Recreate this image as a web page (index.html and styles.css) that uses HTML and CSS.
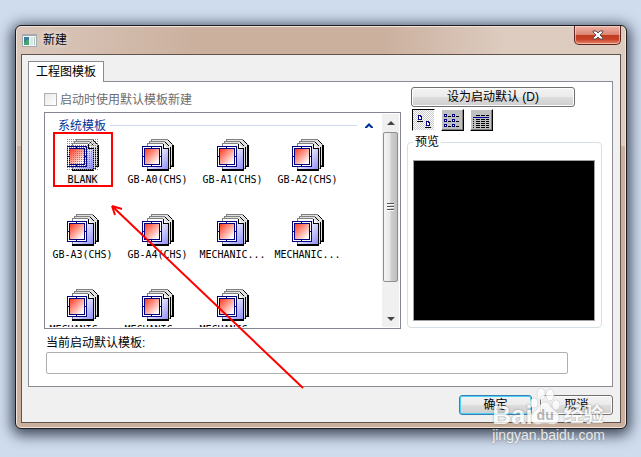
FILE: index.html
```html
<!DOCTYPE html>
<html lang="zh-CN">
<head>
    <meta charset="UTF-8">
    <meta name="viewport" content="width=device-width, initial-scale=1.0">
    <title>新建</title>
    <link rel="stylesheet" href="styles.css">
</head>
<body>
    <!-- shared template icon -->
    <svg class="defs" aria-hidden="true">
        <defs>
            <linearGradient id="sheetRed" x1="0" y1="0" x2="1" y2="1">
                <stop offset="0" stop-color="#ff3a20"/>
                <stop offset="0.9" stop-color="#fff"/>
            </linearGradient>
            <linearGradient id="sheetBlue" x1="0" y1="0" x2="1" y2="1">
                <stop offset="0.3" stop-color="#fff"/>
                <stop offset="1" stop-color="#8f8ff8"/>
            </linearGradient>
            <pattern id="selDots" width="2" height="2" patternUnits="userSpaceOnUse">
                <rect width="1" height="1" fill="#3399ff"/>
            </pattern>
        </defs>
        <symbol id="template" viewBox="0 0 32 32">
            <g shape-rendering="crispEdges">
                <path d="M9 0h17v1h1v1h1v1h1v1h1v1h1v1h1v21H9z" fill="#808080"/>
                <path d="M10 1h15l5 5v20H10z" fill="#e0e0e0"/>
                <path d="M30 6h2v22H29v-1h1zM26 1h1v1h1v1h1v1h1v1h-1V4h-1V3h-1V2h-1z" fill="#000"/>
                <path d="M7 2h16v1h1v1h1v1h1v1h1v1h1v1h1v22H7z" fill="#808080"/>
                <path d="M8 3h15l5 5v21H8z" fill="#e0e0e0"/>
                <path d="M28 8h1v22h-1zM23 3h1v1h1v1h1v1h1v1h-1V6h-1V5h-1V4h-1z" fill="#000"/>
                <path d="M5 4h16v1h1v1h1v1h1v1h1v1h1v1h1v22H5z" fill="#808080"/>
                <path d="M6 5h15l5 5v20H6z" fill="url(#sheetBlue)"/>
                <path d="M26 10h1v22H5v-2h21z" fill="#000"/>
                <path d="M21 5h1v4h5v1h-6z" fill="#000"/>
                <path d="M22 6h1v1h1v1h1v1h-3z" fill="#fff"/>
                <path d="M0 7h20v21H0z" fill="#000080"/>
                <path d="M1 8h18v19H1z" fill="#fff"/>
                <path d="M2 9h16v17H2z" fill="#000080"/>
                <path d="M3 10h14v15H3z" fill="url(#sheetRed)"/>
                <path d="M9 8h1v1h-1zM9 26h1v1h-1zM1 17h1v1h-1zM18 17h1v1h-1z" fill="#000080"/>
            </g>
        </symbol>
    </svg>

    <div class="window">
        <header class="titlebar">
            <svg class="app-icon" width="15" height="13" viewBox="0 0 15 13" shape-rendering="crispEdges">
                <path d="M0 0h15v13H0z" fill="#a5aab0"/>
                <path d="M1 2h13v10H1z" fill="#f4f7f8"/>
                <path d="M2 3h5v8H2z" fill="#3d7c98"/>
                <path d="M2 8h2v-2h3v5H2z" fill="#46a56c"/>
                <path d="M8 3h3v8H8z" fill="#dce6ea"/>
                <path d="M12 3h1v8h-1z" fill="#a9cbb8"/>
            </svg>
            <h1>新建</h1>
            <button class="close" type="button" aria-label="关闭">
                <svg width="12" height="10" viewBox="0 0 12 10">
                    <path d="M1 1h3l2 2 2-2h3v1L8 5l3 3v1H8L6 7 4 9H1V8l3-3-3-3z" fill="#fff" stroke="#5a4b50"/>
                </svg>
            </button>
        </header>

        <main class="client">
            <div class="tabs" role="tablist">
                <button class="tab" type="button" role="tab" aria-selected="true">工程图模板</button>
            </div>

            <section class="panel">
                <div class="columns">
                    <div class="left">
                        <div class="use-default">
                            <input type="checkbox" id="useDefault" disabled>
                            <label for="useDefault">启动时使用默认模板新建</label>
                        </div>

                        <div class="list">
                            <div class="list-content">
                                <div class="group-head">
                                    <h2>系统模板</h2>
                                    <span class="rule"></span>
                                    <svg width="8" height="5" viewBox="0 0 8 5"><path d="M0 4l4-4 4 4v1H6L4 3 2 5H0z" fill="#003399"/></svg>
                                </div>
                                <div class="items">
                                    <button class="item selected" type="button">
                                        <svg width="32" height="32"><use href="#template"/><path d="M0 0h32v32H0z" fill="url(#selDots)"/></svg>
                                        <span>BLANK</span>
                                    </button>
                                    <button class="item" type="button"><svg width="32" height="32"><use href="#template"/></svg><span>GB-A0(CHS)</span></button>
                                    <button class="item" type="button"><svg width="32" height="32"><use href="#template"/></svg><span>GB-A1(CHS)</span></button>
                                    <button class="item" type="button"><svg width="32" height="32"><use href="#template"/></svg><span>GB-A2(CHS)</span></button>
                                    <button class="item" type="button"><svg width="32" height="32"><use href="#template"/></svg><span>GB-A3(CHS)</span></button>
                                    <button class="item" type="button"><svg width="32" height="32"><use href="#template"/></svg><span>GB-A4(CHS)</span></button>
                                    <button class="item" type="button"><svg width="32" height="32"><use href="#template"/></svg><span>MECHANIC...</span></button>
                                    <button class="item" type="button"><svg width="32" height="32"><use href="#template"/></svg><span>MECHANIC...</span></button>
                                    <button class="item" type="button"><svg width="32" height="32"><use href="#template"/></svg><span>MECHANIC...</span></button>
                                    <button class="item" type="button"><svg width="32" height="32"><use href="#template"/></svg><span>MECHANIC...</span></button>
                                    <button class="item" type="button"><svg width="32" height="32"><use href="#template"/></svg><span>MECHANIC...</span></button>
                                </div>
                            </div>
                            <div class="scrollbar">
                                <button class="scroll-btn" type="button" aria-label="向上">
                                    <svg width="8" height="4" viewBox="0 0 8 4"><path d="M4 0l4 4H0z" fill="#444"/></svg>
                                </button>
                                <div class="track">
                                    <div class="thumb">
                                        <svg width="7" height="8" viewBox="0 0 7 8" shape-rendering="crispEdges"><path d="M0 0h7v1H0zM0 3h7v1H0zM0 6h7v1H0z" fill="#555"/><path d="M0 1h7v1H0zM0 4h7v1H0zM0 7h7v1H0z" fill="#fff"/></svg>
                                    </div>
                                </div>
                                <button class="scroll-btn" type="button" aria-label="向下">
                                    <svg width="8" height="4" viewBox="0 0 8 4"><path d="M0 0h8L4 4z" fill="#444"/></svg>
                                </button>
                            </div>
                        </div>
                    </div>

                    <div class="right">
                        <button class="btn set-default" type="button">设为启动默认 (D)</button>
                        <div class="views">
                            <button class="view active" type="button" aria-label="大图标">
                                <svg width="22" height="21" viewBox="0 0 22 21" shape-rendering="crispEdges">
                                    <path d="M5 5h3v1h1v4H5zM13 11h3v1h1v4h-4z" fill="#fff" />
                                    <path d="M5 5h3v1h1v4H5zM6 6v3h2V7H7V6zM13 11h3v1h1v4h-4zM14 12v3h2v-2h-1v-1z" fill="#000080" fill-rule="evenodd"/>
                                    <path d="M4 11h6v1H4zM12 17h6v1h-6z" fill="#000"/>
                                </svg>
                            </button>
                            <button class="view" type="button" aria-label="列表">
                                <svg width="22" height="21" viewBox="0 0 22 21" shape-rendering="crispEdges">
                                    <path d="M2 4h3v3H2zM10 4h3v3h-3zM2 9h3v3H2zM10 9h3v3h-3zM2 14h3v3H2zM10 14h3v3h-3z" fill="#000080"/>
                                    <path d="M3 5h1v1H3zM11 5h1v1h-1zM3 10h1v1H3zM11 10h1v1h-1zM3 15h1v1H3zM11 15h1v1h-1z" fill="#fff"/>
                                    <path d="M6 6h3v1H6zM14 6h3v1h-3zM6 11h3v1H6zM14 11h3v1h-3zM6 16h3v1H6zM14 16h3v1h-3z" fill="#000"/>
                                </svg>
                            </button>
                            <button class="view" type="button" aria-label="详细信息">
                                <svg width="22" height="21" viewBox="0 0 22 21" shape-rendering="crispEdges">
                                    <path d="M2 7h16v1H2zM2 9h1v1H2zM2 11h1v1H2zM2 13h1v1H2zM2 15h1v1H2zM2 17h1v1H2z" fill="#0000a0"/>
                                    <path d="M5 5.5h13M5 9.5h13M5 11.5h13M5 13.5h13M5 15.5h13M5 17.5h13" stroke="#000" stroke-dasharray="4 1"/>
                                </svg>
                            </button>
                        </div>
                        <fieldset class="preview">
                            <legend>预览</legend>
                            <div class="preview-box"></div>
                        </fieldset>
                    </div>
                </div>

                <div class="current">
                    <label for="currentTemplate">当前启动默认模板:</label>
                    <input type="text" id="currentTemplate" readonly>
                </div>
            </section>

            <footer class="actions">
                <button class="btn primary" type="button">确定</button>
                <button class="btn" type="button">取消</button>
            </footer>
        </main>
    </div>

    <!-- red marker and arrow drawn over the dialog -->
    <svg class="marks" width="260" height="264" viewBox="0 0 260 264" aria-hidden="true">
        <path d="M4 5h58v53H4z" fill="none" stroke="#f00" stroke-width="2"/>
        <path d="M63 79L253 260M62 78l3 9M62 78l10 3" fill="none" stroke="#f00" stroke-width="2"/>
    </svg>

    <div class="watermark">
        <div class="brand">
            <span class="bai">Bai</span>
            <span class="paw">
                <svg width="30" height="37" viewBox="0 0 30 37">
                    <g fill="#fff" stroke="#bbb" stroke-opacity="0.5">
                        <ellipse cx="4" cy="15" rx="4" ry="5"/>
                        <ellipse cx="11" cy="6" rx="4" ry="6"/>
                        <ellipse cx="20" cy="7" rx="4" ry="6"/>
                        <ellipse cx="26" cy="17" rx="4" ry="5"/>
                        <path d="M15 14c4 0 5 4 8 7 4 3 7 6 6 10-1 5-5 6-9 5-3-1-7-1-10 0-5 1-9-1-9-6 0-4 4-6 6-9 3-3 4-7 8-7z"/>
                    </g>
                </svg>
                <span class="du">du</span>
            </span>
            <span class="exp">经验</span>
        </div>
        <div class="url">jingyan.baidu.com</div>
    </div>
</body>
</html>
```

FILE: styles.css
```css
* {
    box-sizing: border-box;
}

body {
    margin: 0;
    height: 100vh;
    padding: 25px 14px 28px 15px;
    display: flex;
    background-color: #cfdcee;
    font-family: "Liberation Sans", "Noto Sans CJK SC", sans-serif;
    font-size: 12px;
    line-height: 16px;
    color: #000;
    overflow: hidden;
}

button,
input {
    font: inherit;
    color: inherit;
    margin: 0;
    padding: 0;
}

h1,
h2 {
    margin: 0;
    font-size: 12px;
    font-weight: normal;
}

svg {
    display: block;
    flex: none;
}

.defs {
    position: absolute;
    width: 0;
    height: 0;
}

/* Window frame */
.window {
    flex: 1;
    min-width: 0;
    display: flex;
    flex-direction: column;
    padding: 0 5px 5px;
    border: 1px solid #1d1d1d;
    border-radius: 6px;
    background: linear-gradient(to right, rgba(255, 255, 255, 0.3), rgba(255, 255, 255, 0) 30%, rgba(255, 255, 255, 0) 60%, rgba(255, 255, 255, 0.35) 80%) 0 0 / 100% 120px no-repeat #cbb09e;
    box-shadow: inset 0 0 0 1px #f0e4dc, 0 3px 14px 3px rgba(20, 30, 45, 0.8);
}

.titlebar {
    height: 28px;
    display: flex;
    align-items: center;
    gap: 6px;
    padding-left: 1px;
}

.titlebar h1 {
    flex: 1;
    text-shadow: 0 0 6px #fff;
}

.close {
    align-self: flex-start;
    width: 47px;
    height: 19px;
    display: flex;
    align-items: center;
    justify-content: center;
    border: 1px solid #5c2520;
    border-top: 0;
    border-radius: 0 0 5px 5px;
    background: linear-gradient(#efb5a8, #dc8573 48%, #c03a20 50%, #c9432a 75%, #e8866a);
    box-shadow: inset 0 0 0 1px rgba(255, 220, 210, 0.6);
}

.client {
    flex: 1;
    min-height: 0;
    display: flex;
    flex-direction: column;
    padding: 6px 7px 7px 6px;
    border: 1px solid #61544c;
    background: #f0f0f0;
}

.tabs {
    display: flex;
    margin-bottom: -1px;
}

.tab {
    position: relative;
    height: 21px;
    padding: 0 7px;
    border: 1px solid #898c95;
    border-bottom: 0;
    background: #fff;
}

.panel {
    flex: 1;
    min-height: 0;
    display: flex;
    flex-direction: column;
    padding: 5px 10px 12px 15px;
    border: 1px solid #898c95;
    background: #fff;
}

.columns {
    flex: 1;
    min-height: 0;
    display: grid;
    grid-template-columns: 1fr 195px;
    grid-template-rows: 100%;
    gap: 6px;
}

.left,
.right {
    min-width: 0;
    min-height: 0;
    display: flex;
    flex-direction: column;
}

.use-default {
    height: 25px;
    display: flex;
    align-items: center;
    gap: 3px;
    color: #6d6d6d;
}

.use-default input {
    appearance: none;
    width: 13px;
    height: 13px;
    border: 1px solid #b1b1b1;
    background: linear-gradient(135deg, #e8e8e8, #fff);
}

/* Template list */
.list {
    flex: 1;
    min-height: 0;
    display: flex;
    border: 1px solid #828790;
    padding: 1px;
}

.list-content {
    flex: 1;
    min-width: 0;
    overflow: hidden;
}

.group-head {
    height: 23px;
    display: flex;
    align-items: center;
    gap: 4px;
    padding: 0 9px 0 12px;
}

.group-head h2 {
    color: #003399;
}

.group-head .rule {
    flex: 1;
    height: 1px;
    margin-right: 4px;
    background: #cfdaee;
}

.items {
    display: grid;
    grid-template-columns: repeat(auto-fill, 75px);
    grid-auto-rows: 75px;
    margin-left: -1px;
}

.item {
    display: flex;
    flex-direction: column;
    align-items: center;
    justify-content: flex-start;
    gap: 3px;
    padding: 2px 0 0;
    border: 0;
    background: none;
    font-family: "DejaVu Sans Mono", monospace;
    font-size: 10px;
    line-height: 12px;
}

.item.selected span {
    background: #f0f0f0;
}

.scrollbar {
    width: 17px;
    display: flex;
    flex-direction: column;
    background: #f0f0f0;
}

.scroll-btn {
    height: 17px;
    display: flex;
    align-items: center;
    justify-content: center;
    border: 0;
    background: none;
}

.track {
    flex: 1;
    padding: 1px;
}

.thumb {
    height: 85%;
    display: flex;
    align-items: center;
    justify-content: center;
    border: 1px solid #8f8f8f;
    border-radius: 2px;
    background: linear-gradient(to right, #f5f5f5, #e6e6e6 48%, #cfcfcf 52%, #bfbfbf);
}

/* Right side */
.btn {
    height: 20px;
    border: 1px solid #707070;
    border-radius: 3px;
    background: linear-gradient(#f3f3f3, #ebebeb 48%, #dddddd 52%, #cfcfcf);
    box-shadow: inset 0 0 0 1px #fcfcfc;
}

.set-default {
    width: 164px;
    margin-left: 4px;
}

.views {
    display: flex;
    gap: 6px;
    margin: 2px 0 3px 5px;
}

.view {
    width: 23px;
    height: 22px;
    border: 1px solid #fff;
    border-right-color: #000;
    border-bottom-color: #000;
    background: #c0c0c0;
    box-shadow: inset -1px -1px 0 #808080;
    overflow: hidden;
}

.view.active {
    border-color: #000 #fff #fff #000;
    background: repeating-conic-gradient(#c8c8c8 0 25%, #fff 0 50%) 0 0 / 2px 2px;
    box-shadow: none;
}

.preview {
    flex: 1;
    min-width: 0;
    min-height: 0;
    display: flex;
    margin: 0 0 1px;
    padding: 10px 6px 6px 5px;
    border: 1px solid #d5dfe5;
    border-radius: 4px;
}

.preview legend {
    padding: 0 2px;
}

.preview-box {
    flex: 1;
    border: 1px solid #a0a0a0;
    background: #000;
}

.current {
    display: flex;
    flex-direction: column;
    padding: 6px 34px 0 2px;
}

.current input {
    height: 22px;
    margin-top: 1px;
    border: 1px solid #afafaf;
    border-radius: 2px;
    background: #fff;
}

.actions {
    display: flex;
    justify-content: flex-end;
    gap: 8px;
    padding-top: 8px;
}

.actions .btn {
    width: 73px;
}

.btn.primary {
    border-color: #3c7fb1;
    box-shadow: inset 0 0 0 1px #48d0f8;
}

/* Overlays */
.marks {
    position: absolute;
    left: 50px;
    top: 128px;
    pointer-events: none;
}

.watermark {
    position: absolute;
    right: 36px;
    bottom: 12px;
    color: #fff;
    opacity: 0.8;
    text-shadow: 0 0 2px #777;
    pointer-events: none;
}

.brand {
    display: flex;
    align-items: flex-end;
    height: 37px;
    line-height: 20px;
}

.bai {
    font-size: 26px;
    font-weight: bold;
}

.paw {
    position: relative;
    margin-left: -3px;
}

.du {
    position: absolute;
    left: 7px;
    bottom: 0;
    color: #aaa;
    font-size: 14px;
    font-weight: bold;
    text-shadow: none;
}

.exp {
    margin-left: 4px;
    font-size: 20px;
    font-weight: bold;
}

.url {
    font-size: 14px;
    line-height: 20px;
}
```
